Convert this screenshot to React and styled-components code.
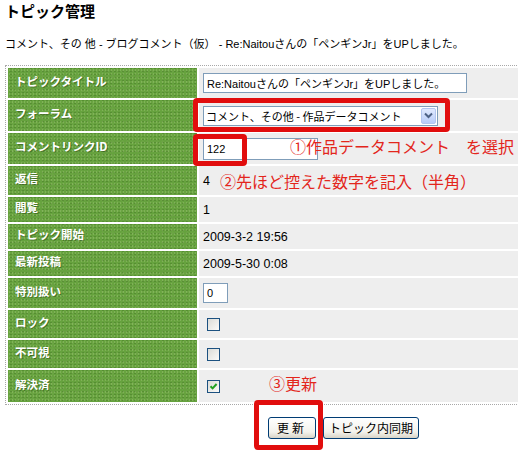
import React from "react";
import styled, { createGlobalStyle } from "styled-components";

const GlobalStyle = createGlobalStyle`
  html, body { margin: 0; padding: 0; background: #fff; overflow: hidden; }
  body { font-family: "Liberation Sans", "Noto Sans CJK JP", sans-serif; color: #000; }
`;

const RED = "#e10d0d";
const NOTE = "#e3261c";

const Page = styled.div`
  box-sizing: border-box;
  padding: 1px 0 14px 5px;
  width: 530px;
  min-height: 454px;
`;

const Title = styled.h1`
  margin: 0;
  font: bold 15px/20px "Noto Sans CJK JP", sans-serif;
`;

const Subtitle = styled.p`
  margin: 16px 0 0;
  font-size: 11px;
  line-height: 14px;
  font-family: "Liberation Sans", "Noto Sans CJK JP", sans-serif;
`;

const FormTable = styled.div`
  margin-top: 14px;
  width: 522px;
  box-sizing: border-box;
  display: grid;
  grid-template-columns: 189px 1fr;
  gap: 2px;
  padding: 2px;
  border: 1px dotted #a8a8a8;
`;

const Label = styled.div`
  height: ${(p) => p.$h}px;
  box-sizing: border-box;
  display: flex;
  align-items: center;
  padding: 0 0 5px 7px;
  background-color: #66a23e;
  background-image:
    radial-gradient(rgba(255, 255, 220, 0.16) 0.7px, transparent 1.1px),
    radial-gradient(rgba(20, 60, 0, 0.2) 0.7px, transparent 1.1px),
    radial-gradient(rgba(120, 170, 80, 0.35) 0.9px, transparent 1.3px);
  background-size: 3px 4px, 4px 3px, 5px 5px;
  background-position: 0 0, 1px 2px, 2px 1px;
  color: #fff;
  font: bold 11.5px/14px "Noto Sans CJK JP", sans-serif;
  text-shadow: 1px 1px 0 rgba(30, 60, 10, 0.45);
`;

const Value = styled.div`
  position: relative;
  display: flex;
  align-items: center;
  padding-left: 4px;
  background: #eeeeee;
  font-size: 12.5px;
`;

const TextInput = styled.input`
  box-sizing: border-box;
  width: ${(p) => p.$w}px;
  height: ${(p) => p.$hgt || 20}px;
  border: 1px solid #7f9db9;
  background: #fff;
  padding: 0 3px;
  font: 11px "Liberation Sans", "Noto Sans CJK JP", sans-serif;
  color: #000;
  outline: none;
`;

const Field = styled.div`
  position: relative;
  display: inline-flex;
`;

const FakeSelect = styled.div`
  box-sizing: border-box;
  position: relative;
  width: 235px;
  height: 20px;
  border: 1px solid #7f9db9;
  background: #fff;
  padding: 0 2px;
  display: flex;
  align-items: center;
  font: 11px "Noto Sans CJK JP", sans-serif;
`;

const SelectArrow = styled.span`
  position: absolute;
  right: 1px;
  top: 1px;
  width: 15px;
  height: 16px;
  box-sizing: border-box;
  border: 1px solid #b3c6ef;
  border-radius: 2px;
  background: linear-gradient(#e0e9fe, #b8ccf8);
  display: flex;
  align-items: center;
  justify-content: center;
`;

const RedBox = styled.span`
  position: absolute;
  left: ${(p) => p.$l}px;
  top: ${(p) => p.$t}px;
  width: ${(p) => p.$w}px;
  height: ${(p) => p.$h}px;
  box-sizing: border-box;
  border: 5px solid ${RED};
  border-radius: 4px;
  pointer-events: none;
`;

const Note = styled.span`
  color: ${NOTE};
  font: 16px/20px "Noto Sans CJK JP", sans-serif;
  white-space: nowrap;
  margin-left: ${(p) => p.$ml || 0}px;
  margin-bottom: ${(p) => p.$mb || 0}px;
`;

const FloatNote = styled(Note)`
  position: absolute;
  left: ${(p) => p.$l}px;
  top: ${(p) => p.$t}px;
`;

const CheckBox = styled.span`
  box-sizing: border-box;
  width: 13px;
  height: 13px;
  margin-left: 4px;
  border: 1px solid #1c5180;
  background: linear-gradient(135deg, #dcdcd7, #fbfbf9);
  display: flex;
  align-items: center;
  justify-content: center;
`;

const ButtonRow = styled.div`
  display: flex;
  align-items: flex-start;
  gap: 7px;
  margin: 12px 0 0 263px;
`;

const Button = styled.button`
  box-sizing: border-box;
  display: block;
  height: 22px;
  width: ${(p) => p.$w}px;
  border: 1px solid #003c74;
  border-radius: 3px;
  background: linear-gradient(#ffffff, #f3f2ec 70%, #d8d3c6);
  font: 12px/20px "Noto Sans CJK JP", sans-serif;
  letter-spacing: ${(p) => p.$ls || 0}px;
  color: #000;
  padding: 0;
  margin: 0;
`;

const Check = ({ checked }) => (
  <CheckBox>
    {checked && (
      <svg width="9" height="9" viewBox="0 0 9 9">
        <path d="M1.5 4.2 L3.6 6.4 L7.6 2" fill="none" stroke="#21a121" strokeWidth="2" />
      </svg>
    )}
  </CheckBox>
);

export default function App() {
  return (
    <>
      <GlobalStyle />
      <Page>
        <Title>トピック管理</Title>
        <Subtitle>
          コメント、その 他 - ブログコメント（仮） - Re:Naitouさんの「ペンギンJr」をUPしました。
        </Subtitle>
        <FormTable>
          <Label $h={30}>トピックタイトル</Label>
          <Value>
            <TextInput $w={264} readOnly defaultValue="Re:Naitouさんの「ペンギンJr」をUPしました。" />
          </Value>

          <Label $h={31}>フォーラム</Label>
          <Value>
            <Field>
              <FakeSelect>
                コメント、その他 - 作品データコメント
                <SelectArrow>
                  <svg width="9" height="7" viewBox="0 0 9 7">
                    <path d="M1 1.5 L4.5 5 L8 1.5" fill="none" stroke="#4d6185" strokeWidth="2" />
                  </svg>
                </SelectArrow>
              </FakeSelect>
              <RedBox $l={-10} $t={-8} $w={257} $h={34} />
            </Field>
          </Value>

          <Label $h={31}>コメントリンクID</Label>
          <Value>
            <Field>
              <TextInput $w={115} $hgt={22} readOnly defaultValue="122" />
              <RedBox $l={-10} $t={-4} $w={54} $h={32} />
            </Field>
            <FloatNote $l={91} $t={3}>①作品データコメント　を選択</FloatNote>
          </Value>

          <Label $h={29}>返信</Label>
          <Value>
            4<Note $ml={10}>②先ほど控えた数字を記入（半角）</Note>
          </Value>

          <Label $h={25}>閲覧</Label>
          <Value>1</Value>

          <Label $h={25}>トピック開始</Label>
          <Value>2009-3-2 19:56</Value>

          <Label $h={25}>最新投稿</Label>
          <Value>2009-5-30 0:08</Value>

          <Label $h={30}>特別扱い</Label>
          <Value>
            <TextInput $w={25} readOnly defaultValue="0" />
          </Value>

          <Label $h={28}>ロック</Label>
          <Value>
            <Check />
          </Value>

          <Label $h={28}>不可視</Label>
          <Value>
            <Check />
          </Value>

          <Label $h={32}>解決済</Label>
          <Value>
            <Check checked />
            <Note $ml={49} $mb={7}>③更新</Note>
          </Value>
        </FormTable>
        <ButtonRow>
          <Field>
            <Button $w={48} $ls={3}>更新</Button>
            <RedBox $l={-14} $t={-17} $w={69} $h={50} />
          </Field>
          <Button $w={96}>トピック内同期</Button>
        </ButtonRow>
      </Page>
    </>
  );
}
